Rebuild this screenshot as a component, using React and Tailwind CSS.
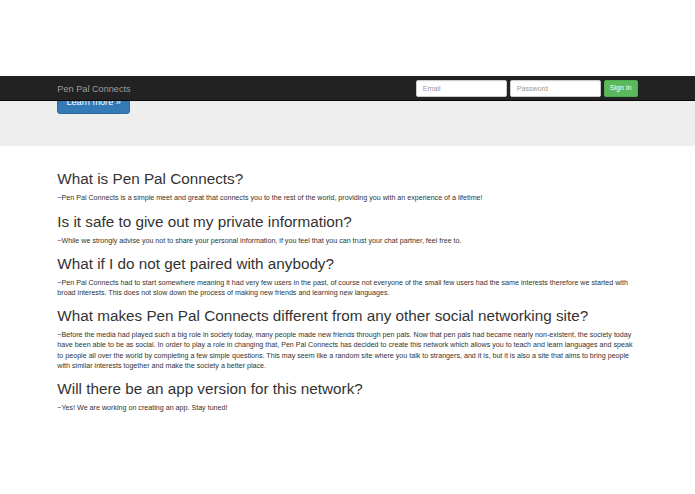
import React from 'react'

const faqs = [
    {
        q: 'What is Pen Pal Connects?',
        a: '~Pen Pal Connects is a simple meet and great that connects you to the rest of the world, providing you with an experience of a lifetime!',
    },
    {
        q: 'Is it safe to give out my private information?',
        a: '~While we strongly advise you not to share your personal information, if you feel that you can trust your chat partner, feel free to.',
    },
    {
        q: 'What if I do not get paired with anybody?',
        a: '~Pen Pal Connects had to start somewhere meaning it had very few users in the past, of course not everyone of the small few users had the same interests therefore we started with broad interests. This does not slow down the process of making new friends and learning new languages.',
    },
    {
        q: 'What makes Pen Pal Connects different from any other social networking site?',
        a: '~Before the media had played such a big role in society today, many people made new friends through pen pals. Now that pen pals had became nearly non-existent, the society today have been able to be as social. In order to play a role in changing that, Pen Pal Connects has decided to create this network which allows you to teach and learn languages and speak to people all over the world by completing a few simple questions. This may seem like a random site where you talk to strangers, and it is, but it is also a site that aims to bring people with similar interests together and make the society a better place.',
    },
    {
        q: 'Will there be an app version for this network?',
        a: '~Yes! We are working on creating an app. Stay tuned!',
    },
]

const App = () => {
    return (
        <div className="min-h-[494px] bg-white text-[#333] font-['Liberation_Sans',Arial,sans-serif]">
            <div className="h-[76px]" />

            <div className="relative">
                {/* navbar sits over the top of the jumbotron */}
                <nav className="absolute top-0 left-0 right-0 z-10 h-[25.4px] bg-[#222] border-b-[0.5px] border-[#080808]">
                    <div className="w-[595.5px] mx-auto px-[7.6px] flex items-start justify-between">
                        <a className="text-[9.16px] leading-[10.2px] py-[7.6px] text-[#9d9d9d]">Pen Pal Connects</a>
                        <form className="flex gap-[3px] mt-[4.07px]">
                            <input
                                placeholder="Email"
                                className="w-[91px] h-[17.3px] px-[6.1px] text-[7.13px] bg-white border-[0.5px] border-[#ccc] rounded-[2px] placeholder:text-[#999] shadow-[inset_0_0.5px_0.5px_rgba(0,0,0,0.075)] outline-none"
                            />
                            <input
                                placeholder="Password"
                                type="password"
                                className="w-[91px] h-[17.3px] px-[6.1px] text-[7.13px] bg-white border-[0.5px] border-[#ccc] rounded-[2px] placeholder:text-[#999] shadow-[inset_0_0.5px_0.5px_rgba(0,0,0,0.075)] outline-none"
                            />
                            <button
                                type="button"
                                className="w-[34px] h-[17.3px] text-[7.13px] text-white bg-[#5cb85c] border-[0.5px] border-[#4cae4c] rounded-[2px]">Sign in</button>
                        </form>
                    </div>
                </nav>

                <section className="bg-[#eee] pt-[14.6px] pb-[24.4px]">
                    <div className="w-[595.5px] mx-auto px-[7.6px]">
                        <p className="flex mb-[7.6px]">
                            <a className="flex items-center h-[23.4px] px-[8.1px] text-[9.16px] leading-none text-white bg-[#337ab7] border-[0.5px] border-[#2e6da4] rounded-[3px]">Learn more &raquo;</a>
                        </p>
                    </div>
                </section>
            </div>

            <div className="w-[595.5px] mx-auto px-[7.6px] pt-[15.3px]">
                {faqs.map((item) => (
                    <div key={item.q}>
                        <h2 className="text-[15.27px] leading-[1.1] font-medium mt-[10.2px] mb-[5.1px]">{item.q}</h2>
                        <p className="text-[7.13px] leading-[10.18px] mb-[5.1px]">{item.a}</p>
                    </div>
                ))}
            </div>
        </div>
    )
}

export default App
